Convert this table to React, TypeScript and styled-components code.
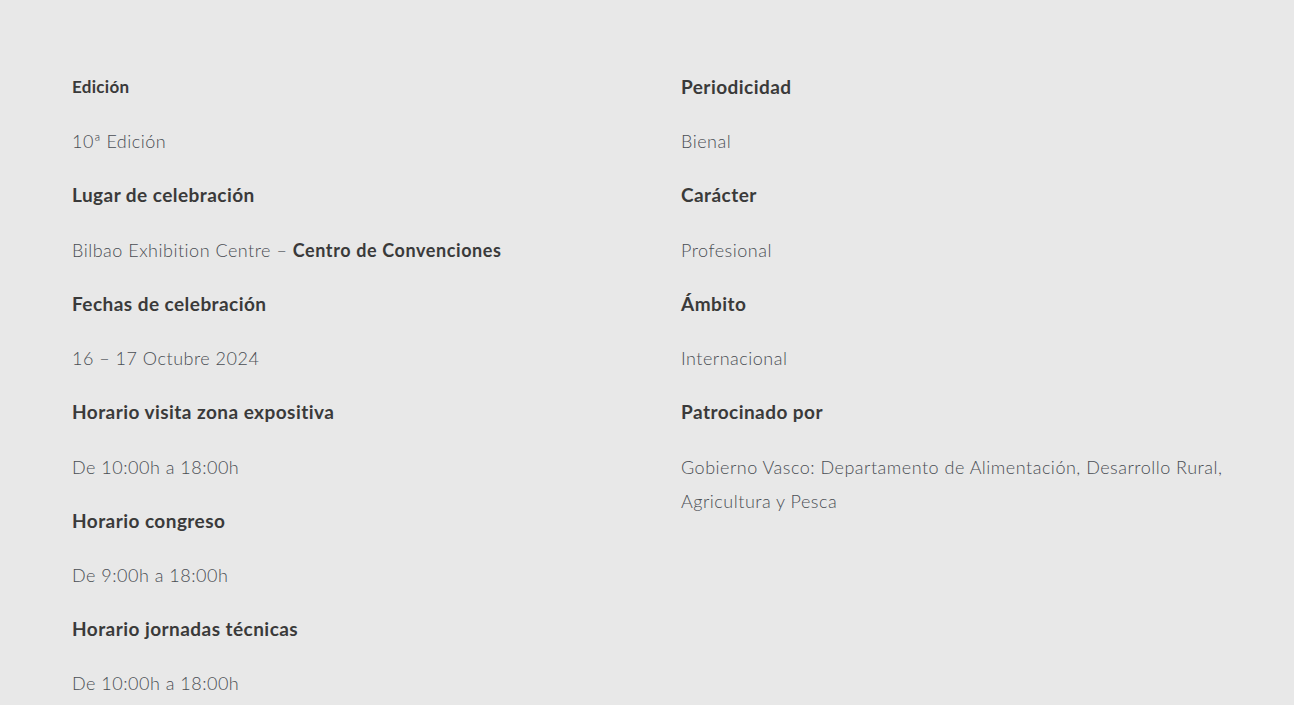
import React from 'react';
import styled, { createGlobalStyle } from 'styled-components';

const GlobalStyle = createGlobalStyle`
  html, body {
    margin: 0;
    padding: 0;
    background: #e8e8e8;
  }
  body {
    font-family: Lato, "Open Sans", "Liberation Sans", sans-serif;
  }
`;

const Page = styled.div`
  background: #e8e8e8;
  min-height: 705px;
  padding: 70px 62px 0 72px;
  box-sizing: border-box;
  display: grid;
  grid-template-columns: 609px 1fr;
`;

const Column = styled.div`
  display: flex;
  flex-direction: column;
`;

const Label = styled.h4<{ $small?: boolean }>`
  margin: 0 0 20px;
  font-size: ${({ $small }) => ($small ? '17px' : '19px')};
  font-weight: 700;
  letter-spacing: ${({ $small }) => ($small ? '0.3px' : '0.45px')};
  line-height: 34.4px;
  color: #3a3a3a;
`;

const Value = styled.p`
  margin: 0 0 20px;
  font-size: 18px;
  font-weight: 300;
  letter-spacing: 0.5px;
  line-height: 34px;
  color: #4a4e54;

  strong {
    font-weight: 700;
    letter-spacing: 0.6px;
    color: #3a3a3a;
  }
`;

type Item = { label: string; value: React.ReactNode; small?: boolean };

const left: Item[] = [
  { label: 'Edición', value: '10ª Edición', small: true },
  { label: 'Lugar de celebración', value: <>Bilbao Exhibition Centre – <strong>Centro de Convenciones</strong></> },
  { label: 'Fechas de celebración', value: '16 – 17 Octubre 2024' },
  { label: 'Horario visita zona expositiva', value: 'De 10:00h a 18:00h' },
  { label: 'Horario congreso', value: 'De 9:00h a 18:00h' },
  { label: 'Horario jornadas técnicas', value: 'De 10:00h a 18:00h' },
];

const right: Item[] = [
  { label: 'Periodicidad', value: 'Bienal' },
  { label: 'Carácter', value: 'Profesional' },
  { label: 'Ámbito', value: 'Internacional' },
  { label: 'Patrocinado por', value: <>Gobierno Vasco: Departamento de Alimentación, Desarrollo Rural,<br />Agricultura y Pesca</> },
];

const renderItems = (items: Item[]) =>
  items.map((item) => (
    <React.Fragment key={item.label}>
      <Label $small={item.small}>{item.label}</Label>
      <Value>{item.value}</Value>
    </React.Fragment>
  ));

const App: React.FC = () => (
  <>
    <GlobalStyle />
    <Page>
      <Column>{renderItems(left)}</Column>
      <Column>{renderItems(right)}</Column>
    </Page>
  </>
);

export default App;
